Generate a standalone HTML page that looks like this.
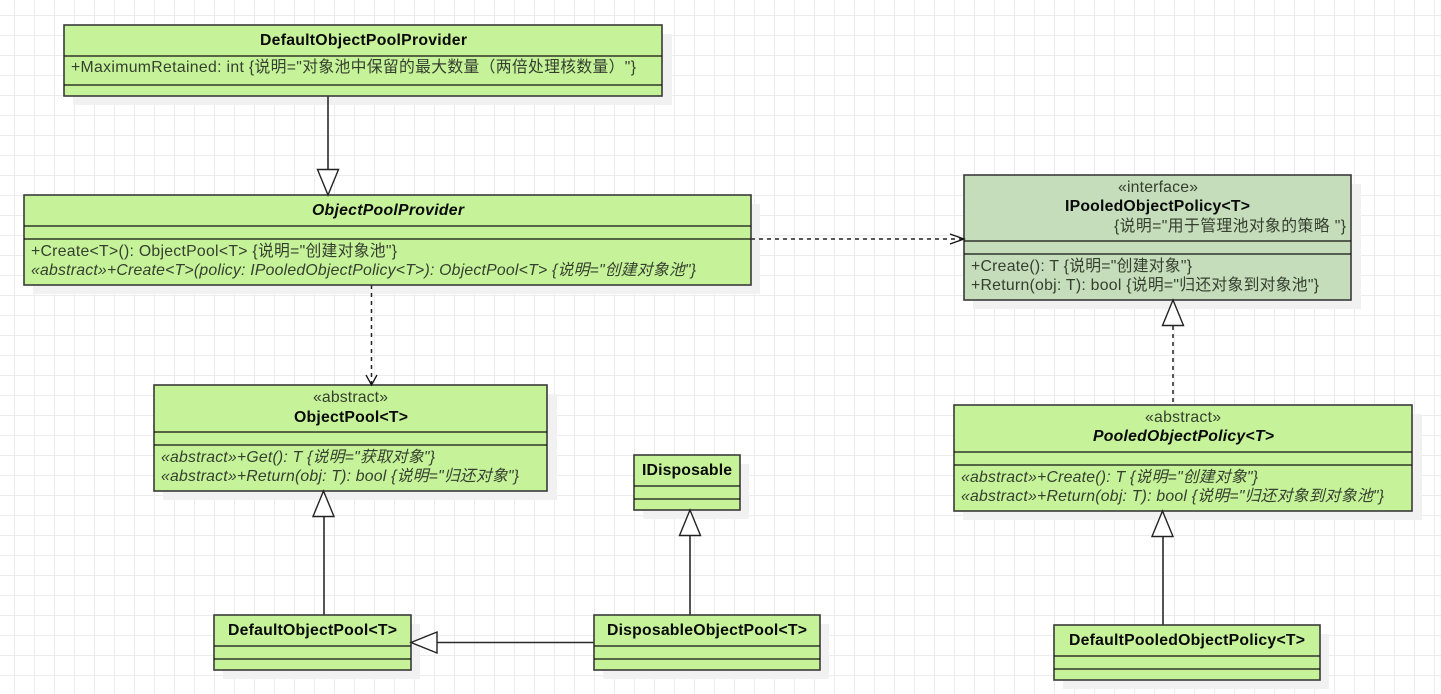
<!DOCTYPE html>
<html><head><meta charset="utf-8"><style>
html,body{margin:0;padding:0;background:#fff;width:1441px;height:694px;overflow:hidden}
svg{display:block}
text{font-family:"Liberation Sans","Noto Sans CJK SC",sans-serif;font-size:15.8px;fill:#353f2e}
.b{font-weight:bold;fill:#0a0a0a}
.i{font-style:italic}
.box{stroke:#3a3a3a;stroke-width:1.6;fill:#c6f39a}
.g{fill:#c5ddbb}
.s{fill:#f1f1f1}
.l{stroke:#111;stroke-width:1.3;fill:none}
.c{stroke:#2a2a2a;stroke-width:1.6;fill:none}
.d{stroke:#222;stroke-width:1.5;fill:none;stroke-dasharray:4 4}
.t{stroke:#222;stroke-width:1.4;fill:#fff}
</style></head><body>
<svg width="1441" height="694" viewBox="0 0 1441 694" xmlns="http://www.w3.org/2000/svg">
<defs><pattern id="gr" x="14" y="15" width="20" height="20" patternUnits="userSpaceOnUse"><path d="M0.5 0V20M0 0.5H20" stroke="#ececec" stroke-width="1" fill="none"/></pattern></defs>
<rect width="1441" height="694" fill="#fff"/>
<rect width="1441" height="694" fill="url(#gr)"/>

<!-- shadows -->
<rect class="s" x="73" y="34" width="599" height="71"/>
<rect class="s" x="33" y="204" width="727" height="90"/>
<rect class="s" x="973" y="184" width="388" height="125"/>
<rect class="s" x="163" y="394" width="394" height="106"/>
<rect class="s" x="643" y="464" width="106" height="55"/>
<rect class="s" x="963" y="414" width="459" height="106"/>
<rect class="s" x="223" y="624" width="197" height="55"/>
<rect class="s" x="603" y="624" width="226" height="55"/>
<rect class="s" x="1063" y="634" width="266" height="55"/>

<!-- connectors -->
<path class="c" d="M328 96V170"/>
<path class="d" d="M371.500 285V384"/>
<path class="d" d="M751 239H963"/>
<path class="d" d="M1173 326V405"/>
<path class="c" d="M324 516V615"/>
<path class="c" d="M690 535V615"/>
<path class="c" d="M437 642.500H594"/>
<path class="c" d="M1163 536V625"/>

<!-- boxes -->
<rect class="box" x="64" y="25" width="598" height="71"/>
<path class="l" d="M64 56H662M64 85H662"/>
<rect class="box" x="24" y="195" width="727" height="90"/>
<path class="l" d="M24 226H751M24 239H751"/>
<rect class="box g" x="964" y="175" width="387" height="125"/>
<path class="l" d="M964 241H1351M964 254H1351"/>
<rect class="box" x="154" y="385" width="393" height="106"/>
<path class="l" d="M154 432H547M154 445H547"/>
<rect class="box" x="634" y="455" width="106" height="55"/>
<path class="l" d="M634 486H740M634 499H740"/>
<rect class="box" x="954" y="405" width="458" height="106"/>
<path class="l" d="M954 452H1412M954 465H1412"/>
<rect class="box" x="214" y="615" width="197" height="55"/>
<path class="l" d="M214 646H411M214 659H411"/>
<rect class="box" x="594" y="615" width="226" height="55"/>
<path class="l" d="M594 646H820M594 659H820"/>
<rect class="box" x="1054" y="625" width="266" height="55"/>
<path class="l" d="M1054 656H1320M1054 669H1320"/>

<!-- arrowheads -->
<path class="t" d="M317.500 169.500H338.500L328 195Z"/>
<path class="l" d="M366 375L371.500 385L377 375"/>
<path class="l" d="M950 234L964 239L950 244"/>
<path class="t" d="M1173 300L1183.500 325.500H1162.500Z"/>
<path class="t" d="M323.500 491L334 516.500H313Z"/>
<path class="t" d="M690 510L700.500 535.500H679.500Z"/>
<path class="t" d="M411 642.500L437 632V653Z"/>
<path class="t" d="M1162.500 511L1173 536.500H1152Z"/>

<!-- text -->
<text class="b" x="260" y="45" textLength="207">DefaultObjectPoolProvider</text>
<text x="71" y="72" textLength="565">+MaximumRetained: int {说明="对象池中保留的最大数量（两倍处理核数量）"}</text>

<text class="b i" x="312" y="215" textLength="152">ObjectPoolProvider</text>
<text x="31" y="256" textLength="366">+Create&lt;T&gt;(): ObjectPool&lt;T&gt; {说明="创建对象池"}</text>
<text class="i" x="31" y="275" textLength="665">«abstract»+Create&lt;T&gt;(policy: IPooledObjectPolicy&lt;T&gt;): ObjectPool&lt;T&gt; {说明="创建对象池"}</text>

<text x="1118" y="192" textLength="80">«interface»</text>
<text class="b" x="1065" y="211" textLength="185">IPooledObjectPolicy&lt;T&gt;</text>
<text x="1114" y="231" textLength="232">{说明="用于管理池对象的策略 "}</text>
<text x="971" y="271" textLength="221">+Create(): T {说明="创建对象"}</text>
<text x="971" y="290" textLength="348">+Return(obj: T): bool {说明="归还对象到对象池"}</text>

<text x="313" y="402" textLength="75">«abstract»</text>
<text class="b" x="294" y="422" textLength="114">ObjectPool&lt;T&gt;</text>
<text class="i" x="161" y="462" textLength="274">«abstract»+Get(): T {说明="获取对象"}</text>
<text class="i" x="161" y="481" textLength="358">«abstract»+Return(obj: T): bool {说明="归还对象"}</text>

<text class="b" x="642" y="475" textLength="90">IDisposable</text>

<text x="1145" y="422" textLength="76">«abstract»</text>
<text class="b i" x="1093" y="441" textLength="181">PooledObjectPolicy&lt;T&gt;</text>
<text class="i" x="961" y="482" textLength="297">«abstract»+Create(): T {说明="创建对象"}</text>
<text class="i" x="961" y="501" textLength="423">«abstract»+Return(obj: T): bool {说明="归还对象到对象池"}</text>

<text class="b" x="228" y="635" textLength="169">DefaultObjectPool&lt;T&gt;</text>
<text class="b" x="607" y="635" textLength="200">DisposableObjectPool&lt;T&gt;</text>
<text class="b" x="1069" y="645" textLength="236">DefaultPooledObjectPolicy&lt;T&gt;</text>
</svg>
</body></html>
